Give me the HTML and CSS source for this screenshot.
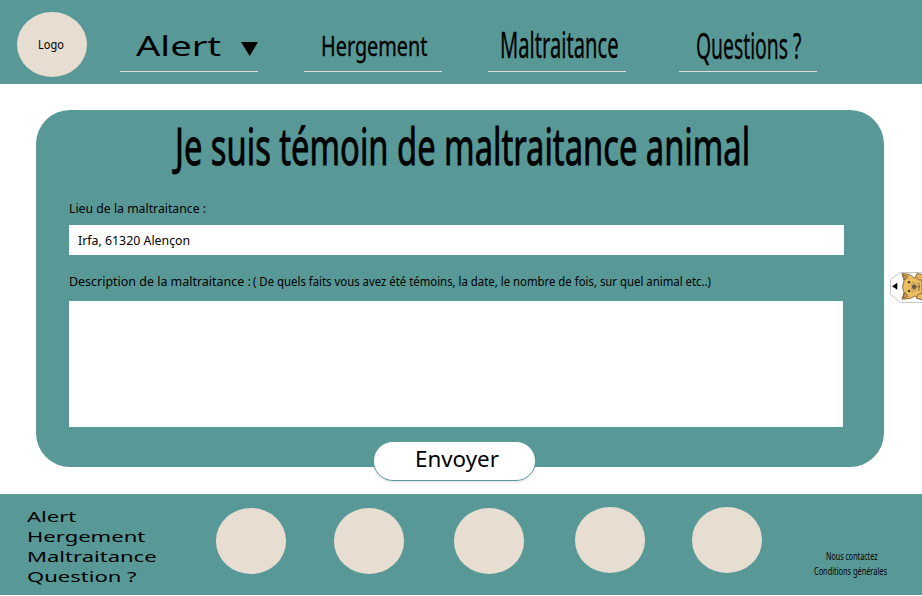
FILE: index.html
```html
<!DOCTYPE html>
<html lang="fr">
<head>
<meta charset="utf-8">
<title>Maltraitance animale</title>
<link rel="stylesheet" href="styles.css">
</head>
<body>
<header class="header">
  <div class="logo"><span class="t logo-text">Logo</span></div>
  <nav class="nav">
    <a class="nav-link alert"><span class="t">Alert</span><svg class="caret" width="17" height="14" viewBox="0 0 17 14"><path d="M0 0H17L8.7 14Z"/></svg></a>
    <a class="nav-link hergement"><span class="t">Hergement</span></a>
    <a class="nav-link maltraitance"><span class="t">Maltraitance</span></a>
    <a class="nav-link questions"><span class="t">Questions ?</span></a>
  </nav>
</header>
<main class="main">
  <form class="panel">
    <h1 class="title"><span class="t">Je suis témoin de maltraitance animal</span></h1>
    <div class="label place-label"><span class="t">Lieu de la maltraitance :</span></div>
    <div class="field"><span class="t">Irfa, 61320 Alençon</span></div>
    <div class="label desc-label"><span class="t desc-main">Description de la maltraitance :</span><span class="t desc-hint">( De quels faits vous avez été témoins, la date, le nombre de fois, sur quel animal etc..)</span></div>
    <div class="area"></div>
  </form>
  <div class="send"><span class="t">Envoyer</span></div>
  <svg class="tag" width="32" height="31" viewBox="0 0 32 31">
    <path d="M32 .5H10.5L.5 7.5V22.5L10.5 30.5H32" fill="#fff" stroke="#b9b9b9" stroke-width=".8"/>
    <path d="M2 14.2L7.3 10.8V17.8Z" fill="#000"/>
    <g stroke="#74552b" stroke-width=".8" stroke-linejoin="round">
      <path d="M12 1.5L19.5 2.3 24 6 32 4V26.5L25 24 20 26.5 12 27.2 14 20.5 12.5 15 14 8.5Z" fill="#edbd62"/>
      <path d="M12.8 2.8L18 4.3 15 8ZM12.8 26L18 24.5 15 20.5Z" fill="#d9a05c"/>
      <path d="M32 2.5L27 1.5 25.5 5 29 8 32 8M32 21L28 22.5 26 26 32 28" fill="#e7b456"/>
    </g>
    <path d="M22 9.5Q28 10 27.5 15T22 20.5Q18.5 15 22 9.5Z" fill="#d3a85e"/>
    <ellipse cx="24" cy="14.8" rx="2" ry="2.4" fill="#5d5751"/>
    <circle cx="19" cy="10.3" r="1.2" fill="#493b29"/><circle cx="19" cy="19" r="1.2" fill="#493b29"/>
    <path d="M26 14.8H29M28.5 10.5Q30.5 15 28.5 19" fill="none" stroke="#66502f" stroke-width=".8"/>
  </svg>
</main>
<footer class="footer">
  <div class="links">
    <span class="t">Alert</span><span class="t">Hergement</span><span class="t">Maltraitance</span><span class="t">Question ?</span>
  </div>
  <div class="dots"><i class="dot"></i><i class="dot"></i><i class="dot"></i><i class="dot raised"></i><i class="dot raised"></i></div>
  <div class="legal"><span class="t contact">Nous contactez</span><span class="t terms">Conditions générales</span></div>
</footer>
</body>
</html>
```
FILE: styles.css
```css
* { box-sizing: border-box; }
body {
  margin: 0;
  width: 922px;
  height: 596px;
  overflow: hidden;
  background: #fff;
  color: #000;
  font-family: "Noto Sans", sans-serif;
  line-height: 1;
}
.t {
  display: block;
  white-space: nowrap;
  transform-origin: 0 50%;
}

.header {
  display: flex;
  height: 84.4px;
  background: #589997;
}
.logo {
  width: 70px;
  height: 65px;
  margin: 11.7px 33.5px 0 16.5px;
  padding: 27.5px 0 0 21px;
  border-radius: 50%;
  background: #e7ddd1;
}
.logo-text { font-size: 12px; transform: scaleX(.92); }
.nav { display: flex; }
.nav-link {
  display: flex;
  width: 137.6px;
  height: 72.4px;
  margin-right: 46.6px;
  border-bottom: 1.5px solid #dcdad3;
}
.alert { padding: 31px 0 0 15.5px; font-size: 28px; }
.alert .t { width: 107.5px; transform: scaleX(1.36); }
.caret { flex: none; margin-top: 10.5px; }
.hergement { padding: 32px 0 0 16.5px; font-size: 27px; }
.hergement .t { transform: scaleX(.735); }
.maltraitance { height: 71.6px; margin-right: 53.4px; padding: 27px 0 0 11.5px; font-size: 36px; }
.maltraitance .t { transform: scaleX(.56); }
.questions { padding: 26px 0 0 17px; font-size: 37px; }
.questions .t { transform: scaleX(.522); }
.hergement .t, .maltraitance .t, .questions .t { -webkit-text-stroke: .3px #000; }

.main { position: relative; height: 409.6px; padding: 25.8px 0 0 35.7px; }
.panel {
  width: 848.8px;
  height: 356.6px;
  padding: 0 0 0 33.3px;
  border-radius: 34px;
  background: #589997;
}
.title { margin: 0; padding: 10px 0 0 106.5px; font-size: 51px; font-weight: 400; }
.title .t { transform: scaleX(.641); -webkit-text-stroke: .9px #000; }
.label { font-size: 13px; }
.place-label { padding-top: 31px; height: 53.8px; }
.place-label .t { transform: scaleX(.943); }
.field { width: 775px; height: 30px; padding: 9px 0 0 9.5px; background: #fff; font-size: 13px; }
.field .t { transform: scaleX(.95); }
.desc-label { display: flex; height: 46px; padding-top: 20px; }
.desc-main { width: 184px; transform: scaleX(.958); }
.desc-hint { font-size: 12px; padding-top: 1px; transform: scaleX(.947); }
.area { width: 774px; height: 126px; background: #fff; }
.send {
  position: absolute;
  left: 373px;
  top: 356.6px;
  width: 163px;
  height: 39.6px;
  padding: 6.5px 0 0 41px;
  border: 1px solid #589997;
  border-radius: 20px;
  background: #fff;
  box-shadow: 0 2px 2px rgba(0, 0, 0, .08);
  font-size: 21.5px;
}
.send .t { transform: scaleX(1.04); }
.tag { position: absolute; left: 890px; top: 187.6px; }

.footer {
  display: flex;
  height: 101.5px;
  background: #589997;
}
.links { width: 216px; padding: 12px 0 0 26.5px; font-size: 14.7px; line-height: 20px; }
.links .t { transform: scaleX(1.5); }
.dots { display: flex; gap: 48.7px; padding-top: 14.5px; width: 598px; }
.dot { flex: none; width: 70.3px; height: 65.4px; border-radius: 50%; background: #e7ddd1; }
.dot:nth-child(2) { margin: 0 1.2px 0 -1px; }
.raised { margin-top: -1px; }
.raised:last-child { margin-left: -2px; }
.dot:nth-child(4) { margin-left: 1.5px; }
.legal { padding-top: 55px; font-size: 10.5px; line-height: 15px; }
.contact { margin-left: 12px; transform: scaleX(.68); }
.terms { transform: scaleX(.7); }
```
